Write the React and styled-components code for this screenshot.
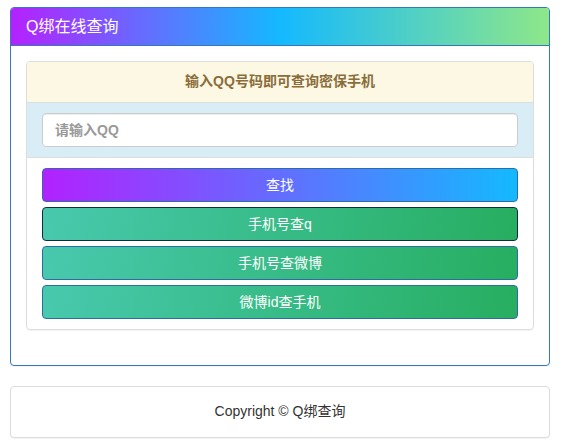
import React from "react";
import styled, { createGlobalStyle } from "styled-components";

const Global = createGlobalStyle`
  html, body { margin: 0; padding: 0; background: #fff; }
  body {
    font-family: "Liberation Sans", Arial, "Noto Sans CJK SC", sans-serif;
    font-size: 14px;
    line-height: 1.42857;
    color: #333;
  }
  * { box-sizing: border-box; }
`;

const Page = styled.div`
  width: 540px;
  margin: 7px 0 0 10px;
`;

const Panel = styled.div`
  background: #fff;
  border: 1px solid ${(p) => p.$border};
  border-radius: 4px;
  margin-bottom: 20px;
  box-shadow: 0 1px 1px rgba(0, 0, 0, 0.05);
  overflow: hidden;
`;

const PanelHeading = styled.div`
  padding: 10px 15px;
  font-size: 16px;
  line-height: 17px;
  color: #fff;
  background: linear-gradient(90deg, #b521ff 0%, #14b9ff 50%, #8ee789 100%);
  border-bottom: 1px solid #337ab7;
`;

const PanelBody = styled.div`
  padding: 15px;
`;

const InnerPanel = styled.div`
  border: 1px solid #ddd;
  border-radius: 4px;
  overflow: hidden;
  margin-bottom: 20px;
  box-shadow: 0 1px 1px rgba(0, 0, 0, 0.05);
`;

const Notice = styled.div`
  background: #fcf8e3;
  color: #8a6d3b;
  font-weight: bold;
  text-align: center;
  padding: 10px 15px;
  border-bottom: 1px solid #ddd;
`;

const InputRow = styled.div`
  background: #d9edf7;
  padding: 10px 15px;
  border-bottom: 1px solid #ddd;
`;

const Input = styled.input`
  display: block;
  width: 100%;
  height: 34px;
  padding: 6px 12px;
  font-family: inherit;
  font-size: 14px;
  font-weight: bold;
  color: #555;
  background: #fff;
  border: 1px solid #ccc;
  border-radius: 4px;
  box-shadow: inset 0 1px 1px rgba(0, 0, 0, 0.075);
  outline: none;
  &::placeholder { color: #999; }
`;

const ButtonList = styled.div`
  display: flex;
  flex-direction: column;
  gap: 5px;
  padding: 10px 15px;
`;

const Button = styled.button`
  display: block;
  width: 100%;
  height: 34px;
  padding: 6px 12px;
  font-family: inherit;
  font-size: 14px;
  line-height: 20px;
  color: #fff;
  text-align: center;
  border-radius: 4px;
  border: 1px solid ${(p) => (p.$active ? "#122b40" : "#2e6da4")};
  background: ${(p) =>
    p.$primary
      ? "linear-gradient(90deg, #b221ff 0%, #14b9ff 100%)"
      : "linear-gradient(100deg, #48c9ae 0%, #27ae60 100%)"};
  cursor: pointer;
`;

const FooterBody = styled.div`
  padding: 15px;
  text-align: center;
  color: #333;
`;

export default function App() {
  return (
    <>
      <Global />
      <Page>
        <Panel $border="#337ab7">
          <PanelHeading>Q绑在线查询</PanelHeading>
          <PanelBody>
            <InnerPanel>
              <Notice>输入QQ号码即可查询密保手机</Notice>
              <InputRow>
                <Input placeholder="请输入QQ" />
              </InputRow>
              <ButtonList>
                <Button $primary>查找</Button>
                <Button $active>手机号查q</Button>
                <Button>手机号查微博</Button>
                <Button>微博id查手机</Button>
              </ButtonList>
            </InnerPanel>
          </PanelBody>
        </Panel>
        <Panel $border="#ddd">
          <FooterBody>Copyright © Q绑查询</FooterBody>
        </Panel>
      </Page>
    </>
  );
}
